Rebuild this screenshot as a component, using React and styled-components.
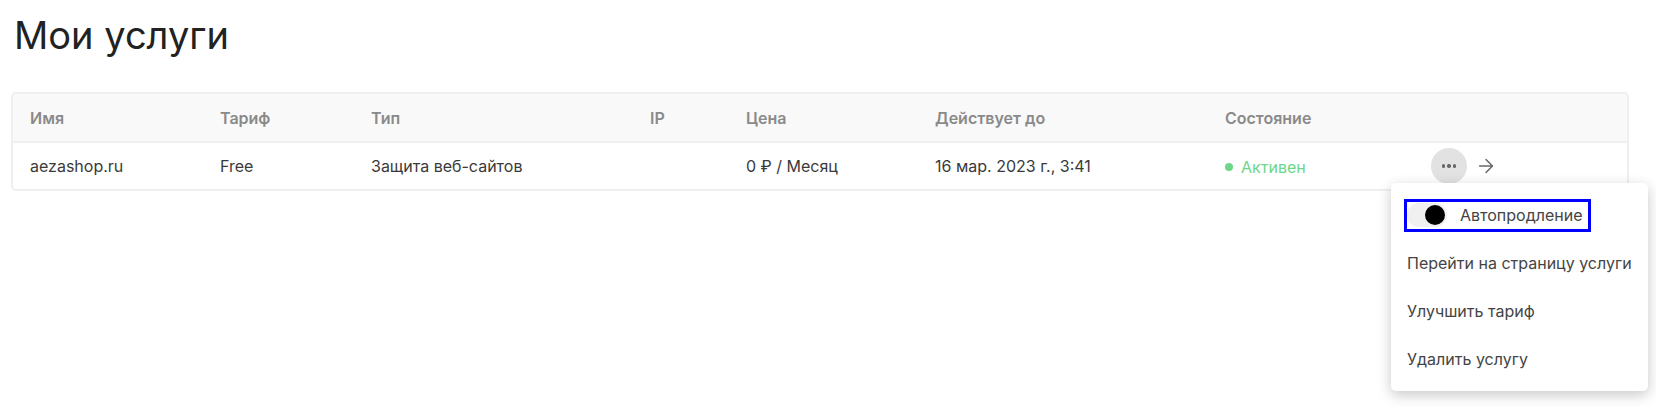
import React, { useState } from 'react';
import styled, { createGlobalStyle } from 'styled-components';
import { ArrowRight } from 'lucide-react';

const services = [
  {
    id: 1,
    name: 'aezashop.ru',
    tariff: 'Free',
    type: 'Защита веб-сайтов',
    ip: '',
    price: '0 ₽ / Месяц',
    until: '16 мар. 2023 г., 3:41',
    status: 'Активен',
  },
];

const columns = ['Имя', 'Тариф', 'Тип', 'IP', 'Цена', 'Действует до', 'Состояние', ''];

const App = () => {
  const [autoRenew, setAutoRenew] = useState(false);

  return (
    <>
      <GlobalStyle />
      <Page>
        <Title>Мои услуги</Title>
        <Card>
          <HeaderRow>
            {columns.map((c, i) => (
              <HeadCell key={i}>{c}</HeadCell>
            ))}
          </HeaderRow>
          {services.map(s => (
            <Row key={s.id}>
              <Cell>{s.name}</Cell>
              <Cell>{s.tariff}</Cell>
              <Cell>{s.type}</Cell>
              <Cell>{s.ip}</Cell>
              <Cell>{s.price}</Cell>
              <Cell>{s.until}</Cell>
              <Cell>
                <Status>{s.status}</Status>
              </Cell>
              <ActionsCell>
                <DotsButton aria-label="Меню">
                  <Dot /><Dot /><Dot />
                </DotsButton>
                <ArrowButton aria-label="Открыть">
                  <ArrowRight size={22} strokeWidth={1.6} />
                </ArrowButton>
                <Menu>
                  <MenuItem>
                    <SwitchLabel>
                      <Track $on={autoRenew} onClick={() => setAutoRenew(v => !v)}>
                        <Knob $on={autoRenew} />
                      </Track>
                      Автопродление
                    </SwitchLabel>
                  </MenuItem>
                  <MenuItem>Перейти на страницу услуги</MenuItem>
                  <MenuItem>Улучшить тариф</MenuItem>
                  <MenuItem>Удалить услугу</MenuItem>
                </Menu>
              </ActionsCell>
            </Row>
          ))}
        </Card>
      </Page>
    </>
  );
};

const GlobalStyle = createGlobalStyle`
  html, body, #root {
    height: 100%;
  }
  body {
    margin: 0;
    background: #fff;
    font-family: Inter, "Noto Sans", sans-serif;
    color: #333;
  }
`;

const Page = styled.div`
  min-height: 100vh;
  box-sizing: border-box;
  padding: 10px 27px 0 11px;
`;

const Title = styled.h1`
  margin: 0 0 32px 3px;
  font-size: 38px;
  line-height: 50px;
  font-weight: 400;
  color: #222;
`;

const grid = `
  display: grid;
  grid-template-columns: 190px 151px 279px 96px 189px 290px 206px 1fr;
  padding-left: 17px;
  align-items: center;
`;

const Card = styled.div`
  border: 2px solid #efefef;
  border-radius: 5px;
  background: #fff;
`;

const HeaderRow = styled.div`
  ${grid}
  height: 47px;
  background: #f9f9f9;
  border-bottom: 2px solid #efefef;
  border-radius: 4px 4px 0 0;
`;

const HeadCell = styled.div`
  font-size: 16px;
  font-weight: 600;
  color: #8a8a8a;
`;

const Row = styled.div`
  ${grid}
  height: 46px;
`;

const Cell = styled.div`
  font-size: 16px;
  color: #3a3a3a;
`;

const Status = styled.span`
  display: inline-flex;
  align-items: center;
  gap: 8px;
  color: #6cd68a;

  &::before {
    content: '';
    width: 8px;
    height: 8px;
    border-radius: 50%;
    background: #6cd68a;
  }
`;

const ActionsCell = styled.div`
  position: relative;
  display: flex;
  align-items: center;
  gap: 8px;
  height: 100%;
`;

const DotsButton = styled.button`
  width: 36px;
  height: 36px;
  border: none;
  border-radius: 50%;
  background: #e2e2e2;
  display: flex;
  align-items: center;
  justify-content: center;
  gap: 2px;
  padding: 0;
  cursor: pointer;
`;

const Dot = styled.span`
  width: 3.5px;
  height: 3.5px;
  border-radius: 50%;
  background: #666;
`;

const ArrowButton = styled.button`
  border: none;
  background: none;
  padding: 0;
  display: flex;
  color: #666;
  cursor: pointer;
`;

const Menu = styled.div`
  position: absolute;
  top: 40px;
  left: -40px;
  width: 257px;
  padding: 8px 0;
  background: #fff;
  border-radius: 5px;
  box-shadow: 0 4px 14px rgba(0, 0, 0, 0.22);
  z-index: 10;
`;

const MenuItem = styled.div`
  height: 48px;
  display: flex;
  align-items: center;
  padding: 0 16px;
  font-size: 16px;
  color: #444;
  cursor: pointer;
`;

const SwitchLabel = styled.label`
  display: inline-flex;
  align-items: center;
  gap: 13px;
  height: 27px;
  padding-right: 6px;
  outline: 3px solid #0000ff;
  cursor: pointer;
`;

const Track = styled.span`
  position: relative;
  width: 40px;
  height: 24px;
  border-radius: 12px;
  background: ${({ $on }) => ($on ? '#cfe9d6' : '#f0f0f0')};
`;

const Knob = styled.span`
  position: absolute;
  top: 2px;
  left: 18px;
  width: 20px;
  height: 20px;
  border-radius: 50%;
  background: #000;
`;

export default App;
